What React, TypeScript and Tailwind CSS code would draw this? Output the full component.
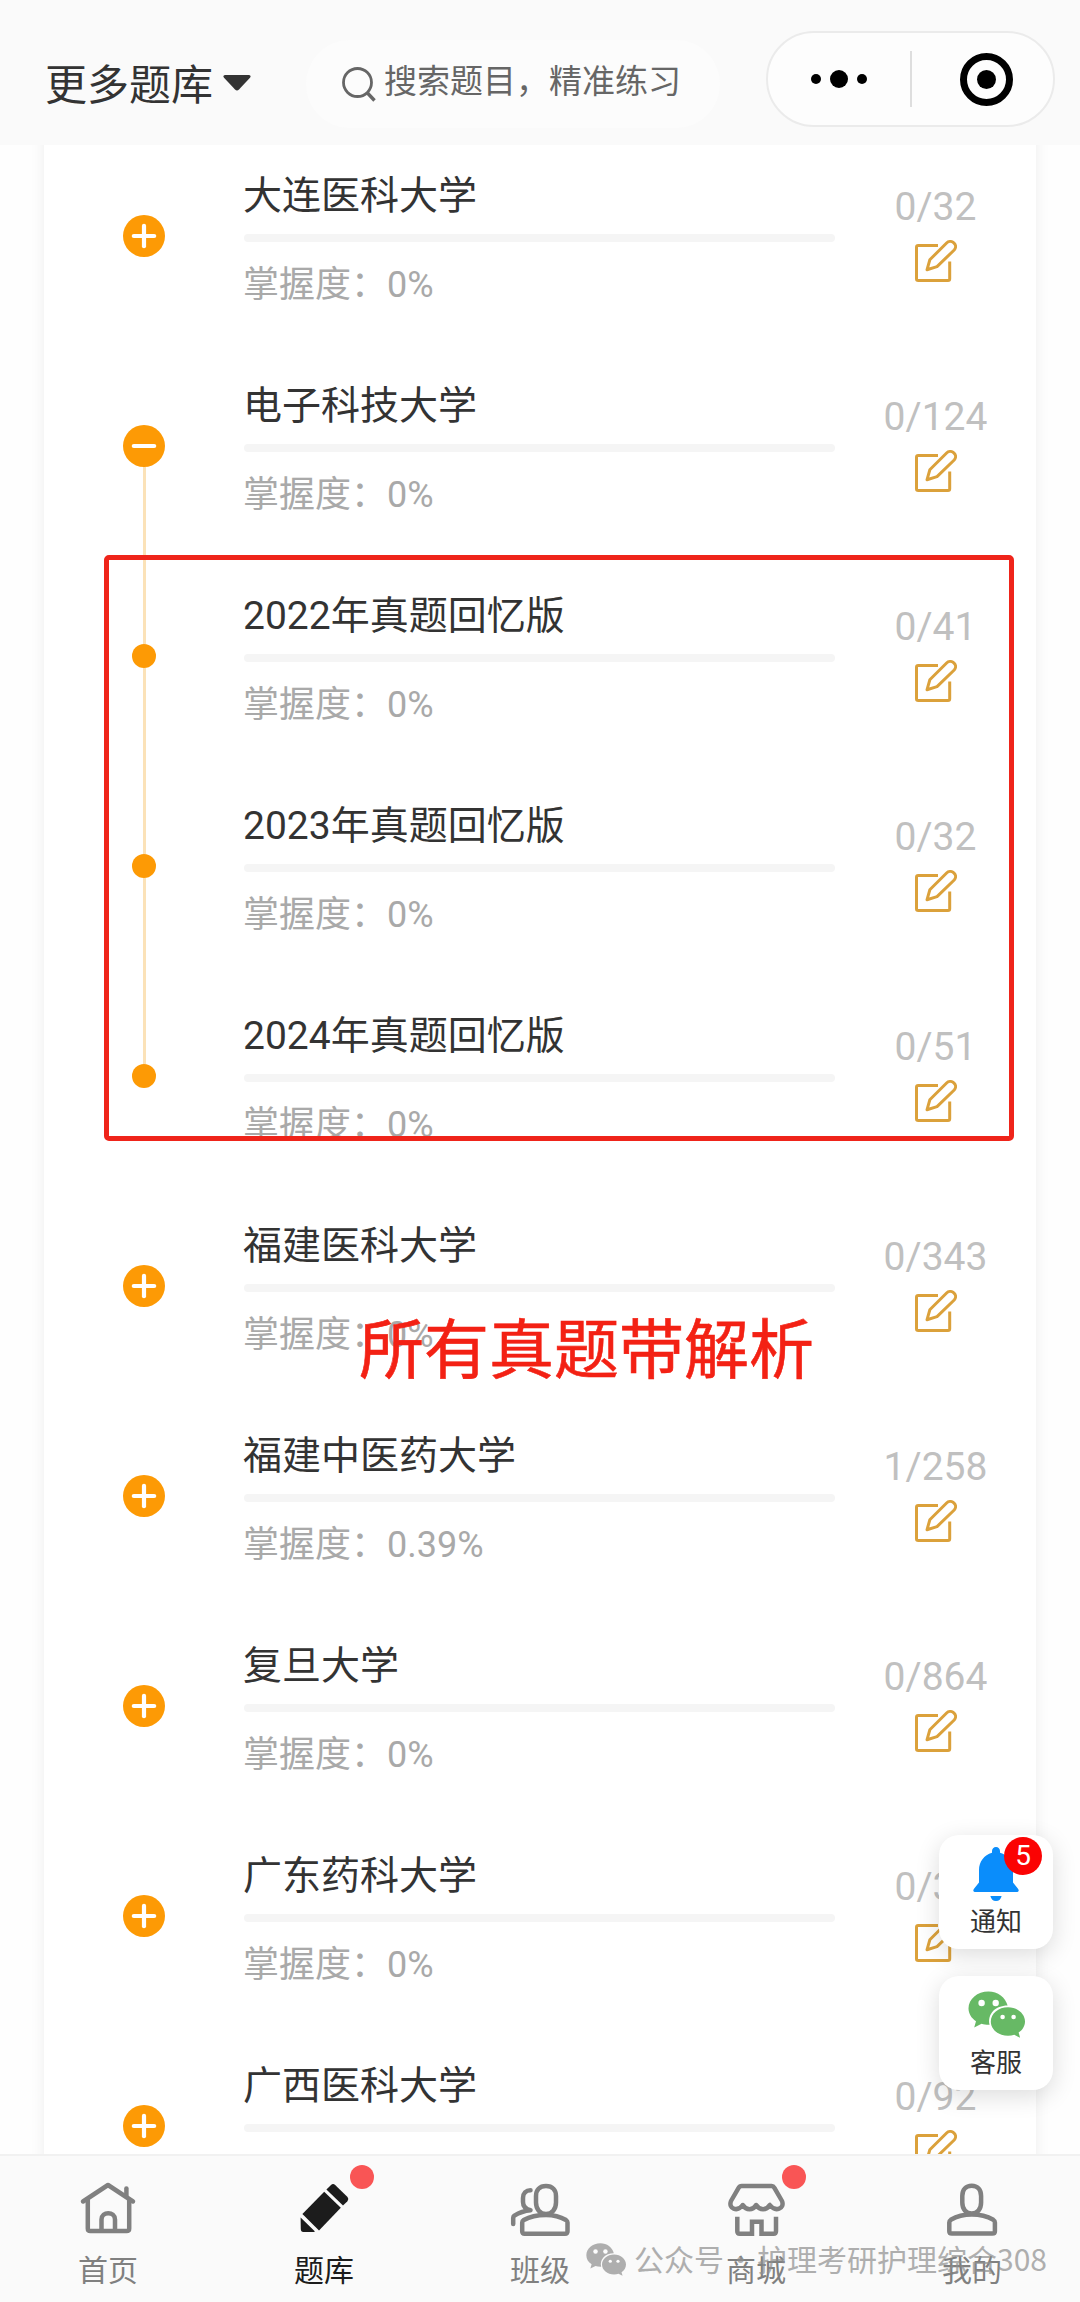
import type { ReactNode } from 'react';

type NodeType = 'plus' | 'minus' | 'dot';

interface Item {
  title: string;
  done: number;
  total: number;
  rate: string;
  type: NodeType;
  last?: boolean;
}

const items: Item[] = [
  { title: '大连医科大学', done: 0, total: 32, rate: '0%', type: 'plus' },
  { title: '电子科技大学', done: 0, total: 124, rate: '0%', type: 'minus' },
  { title: '2022年真题回忆版', done: 0, total: 41, rate: '0%', type: 'dot' },
  { title: '2023年真题回忆版', done: 0, total: 32, rate: '0%', type: 'dot' },
  { title: '2024年真题回忆版', done: 0, total: 51, rate: '0%', type: 'dot', last: true },
  { title: '福建医科大学', done: 0, total: 343, rate: '0%', type: 'plus' },
  { title: '福建中医药大学', done: 1, total: 258, rate: '0.39%', type: 'plus' },
  { title: '复旦大学', done: 0, total: 864, rate: '0%', type: 'plus' },
  { title: '广东药科大学', done: 0, total: 32, rate: '0%', type: 'plus' },
  { title: '广西医科大学', done: 0, total: 92, rate: '0%', type: 'plus' },
];

function EditIcon() {
  return (
    <svg width="42" height="42" viewBox="0 0 42 42" fill="none" stroke="#dba13b" strokeWidth="3" strokeLinejoin="round">
      <path d="M23 5.5H3.2Q1.5 5.5 1.5 7.2V38.8Q1.5 40.5 3.2 40.5H33Q34.7 40.5 34.7 38.8V21.5" />
      <path d="M12 29.8L14.8 19.8L31.6 3C33.4 1.2 36.4 0.8 38.8 2.8C41.2 5 41 8 39.2 10L22 26.6Z" />
    </svg>
  );
}

function WechatIcon({ className }: { className: string }) {
  return (
    <svg className={className} viewBox="0 0 57 47" fill="currentColor">
      <path d="M20.5 0.5C9.4 0.5 0.5 8 0.5 17.3C0.5 22.6 3.3 27.2 8 30.2L6.2 36.5L13.6 32.8C16 33.5 18.5 33.9 21.6 33.8C19.2 23 27.4 14.7 39.6 14.6C37.6 6.4 29.8 0.5 20.5 0.5Z" />
      <path d="M40 16.2C30.4 16.2 22.8 22.6 22.8 30.5C22.8 38.4 30.4 44.8 40 44.8C42.3 44.8 44.4 44.5 46.3 43.8L52.1 46.8L50.6 41.6C54.5 39 57 35 57 30.5C57 22.6 49.4 16.2 40 16.2Z" />
      <circle cx="13.6" cy="12" r="3.2" fill="#fff" />
      <circle cx="27.7" cy="12" r="3.2" fill="#fff" />
      <circle cx="34.6" cy="26" r="2.3" fill="#fff" />
      <circle cx="45.6" cy="26" r="2.3" fill="#fff" />
    </svg>
  );
}

function TreeNode({ type }: { type: NodeType }) {
  if (type === 'dot') return <div className="h-6 w-6 rounded-full bg-[#fd9a05]" />;
  return (
    <svg width="42" height="42" viewBox="0 0 42 42" stroke="#fff" strokeWidth="4.2" strokeLinecap="round">
      <circle cx="21" cy="21" r="21" fill="#fd9a05" stroke="none" />
      <path d="M10.8 21H31.2" />
      {type === 'plus' && <path d="M21 10.8V31.2" />}
    </svg>
  );
}

function Row({ item }: { item: Item }) {
  const up = item.type === 'dot';
  const down = item.type === 'minus' || (up && !item.last);
  return (
    <div className="flex h-[210px] shrink-0">
      <div className="ml-[75px] flex w-[50px] flex-col items-center">
        <div className={up ? 'w-[3px] flex-1 bg-[#fbe2b8]' : 'flex-1'} />
        <TreeNode type={item.type} />
        <div className={down ? 'w-[3px] flex-1 bg-[#fbe2b8]' : 'flex-1'} />
      </div>
      <div className="ml-[74px] w-[592px] pt-[38px]">
        <p className="h-[54px] text-[39px] leading-[54px] text-[#333]">{item.title}</p>
        <div className="mt-[11px] ml-px h-2 rounded-full bg-[#f5f5f5]" />
        <p className="mt-[21px] h-11 text-[36px] leading-[44px] text-[#a9a9a9]">掌握度：{item.rate}</p>
      </div>
      <div className="flex w-[201px] flex-col items-center pt-[53px]">
        <p className="h-[46px] text-[39px] leading-[46px] text-[#c0c0c0]">
          {item.done}/{item.total}
        </p>
        <div className="mt-[10px]">
          <EditIcon />
        </div>
      </div>
    </div>
  );
}

function Header() {
  return (
    <header className="flex h-[145px] shrink-0 items-start bg-[#fafafa]">
      <div className="mt-[57px] ml-[45px] flex h-14 w-[261px] items-center text-[42px] whitespace-nowrap text-[#333]">
        更多题库
        <svg className="mb-1 ml-[10px]" width="28" height="16" viewBox="0 0 28 16" fill="#333">
          <path d="M2 0H26Q28.6 0.4 27 2.8L16 14.6Q14 16.6 12 14.6L1 2.8Q-0.6 0.4 2 0Z" />
        </svg>
      </div>
      <div className="mt-10 flex h-[88px] w-[414px] items-center rounded-full bg-[#fcfcfc] pl-9 text-[33px] text-[#666]">
        <svg width="34" height="36" viewBox="0 0 34 36" fill="none" stroke="#666" strokeWidth="2.8">
          <circle cx="15.5" cy="16.5" r="14" />
          <path d="M25 26.5L32.5 34.5" strokeWidth="3.4" />
        </svg>
        <span className="ml-2 h-11 whitespace-nowrap leading-[40px]">搜索题目，精准练习</span>
      </div>
      <div className="mt-[31px] ml-[46px] flex h-24 w-[289px] items-center rounded-full border-2 border-[#ebebeb] bg-[#fdfdfd]">
        <div className="flex w-[142px] items-center justify-center gap-[9px]">
          <i className="h-[10px] w-[10px] rounded-full bg-black" />
          <i className="h-[18px] w-[18px] rounded-full bg-black" />
          <i className="h-[10px] w-[10px] rounded-full bg-black" />
        </div>
        <div className="h-14 w-[2px] bg-[#dedede]" />
        <div className="flex flex-1 items-center justify-center pl-[8px]">
          <div className="flex h-[53px] w-[53px] items-center justify-center rounded-full border-[7px] border-black">
            <i className="h-[19px] w-[19px] rounded-full bg-black" />
          </div>
        </div>
      </div>
    </header>
  );
}

function FloatButton({ label, children }: { label: string; children: ReactNode }) {
  return (
    <div className="relative flex h-[114px] w-[114px] flex-col items-center rounded-[20px] bg-white shadow-[0_6px_24px_rgba(0,0,0,0.14)]">
      <div className="flex h-[70px] items-end justify-center">{children}</div>
      <span className="h-[34px] text-[26px] leading-[34px] text-[#333]">{label}</span>
    </div>
  );
}

function Tab({ label, active, dot, children }: { label: string; active?: boolean; dot?: boolean; children: ReactNode }) {
  return (
    <div className={active ? 'relative flex flex-1 flex-col items-center text-[#1c1c1c]' : 'relative flex flex-1 flex-col items-center text-[#808080]'}>
      <div className="mt-6 flex h-[58px] items-center justify-center">{children}</div>
      <span className="mt-[13px] h-10 text-[30px] leading-10">{label}</span>
      {dot && <i className="absolute top-[9px] left-[134px] h-6 w-6 rounded-full bg-[#f95555]" />}
    </div>
  );
}

const tabIcon = {
  width: 60,
  height: 56,
  viewBox: '0 0 60 56',
  fill: 'none',
  stroke: 'currentColor',
  strokeWidth: 4.5,
  strokeLinecap: 'round',
  strokeLinejoin: 'round',
} as const;

function TabBar() {
  return (
    <nav className="relative flex h-[148px] shrink-0 border-t-2 border-[#f1f1f1] bg-[#fafafa]">
      <Tab label="首页">
        <svg {...tabIcon}>
          <path d="M5 20.5L30 4L55 20.5" />
          <path d="M9.8 19V47.5Q9.8 50 12.3 50H48.7Q51.2 50 51.2 47.5V19" />
          <path d="M48.4 7.5V15" />
          <path d="M23.5 49.5V38.5C23.5 30 37 30 37 38.5V49.5" />
        </svg>
      </Tab>
      <Tab label="题库" active dot>
        <svg width="60" height="56" viewBox="0 0 60 56" fill="currentColor">
          <path d="M36.8 4.2Q39 2 41.4 4.2L53 15.6Q55.4 18 53.2 20.4L49 24.6L32.4 8.6Z" />
          <path d="M30.2 10.8L46.8 26.8L25 49.5L8.4 33.1Z" />
          <path d="M6.6 36.4L21 50.4Q19.8 51 18.4 51H9.4Q6.8 51 6.8 48Z" />
        </svg>
      </Tab>
      <Tab label="班级">
        <svg {...tabIcon}>
          <path d="M36 5C29.5 5 26 9 26 15V21.5C26 28 30 33 36 33S46 28 46 21.5V15C46 9 42.5 5 36 5Z" />
          <path d="M36 34C27 34 18 36.6 13.8 39Q12.2 40 12.2 41.6V50.3Q12.2 52.8 14.7 52.8H55Q57.5 52.8 57.5 50.3V41.6Q57.5 40 56 39C51.8 36.6 44.5 34 36 34Z" />
          <path d="M20.5 9.2C16 9.2 13 12.5 13 17V21C13 24.8 15.5 28 20.5 29.3C13 30 8 32.4 4.4 34.6Q3.2 35.5 3.2 37V43" />
        </svg>
      </Tab>
      <Tab label="商城" dot>
        <svg {...tabIcon}>
          <path d="M15.6 5H45.6Q47.4 5 48.4 6.8L56 20C59 27.6 49.5 31.5 43.8 24C40.2 29.8 34 29.8 30.2 24C26.6 29.8 20.4 29.8 16.8 24C11.2 31.5 2 27.6 5 20L12.6 6.8Q13.6 5 15.6 5Z" />
          <path d="M11.3 35.7V50.3Q11.3 52.8 13.8 52.8H26V40.8H35.5V52.8H47.5Q50 52.8 50 50.3V35.7M26 52.8H24M35.5 52.8H37" strokeLinecap="butt" strokeLinejoin="miter" />
        </svg>
      </Tab>
      <Tab label="我的">
        <svg {...tabIcon}>
          <path d="M29.7 4.8C23.8 4.8 20.3 8.8 20.3 15V21.5C20.3 28 24 32.6 29.7 32.6S39.1 28 39.1 21.5V15C39.1 8.8 35.6 4.8 29.7 4.8Z" />
          <path d="M29.8 33.6C21 33.6 13 36.4 8.8 38.8Q7.3 39.8 7.3 41.4V50.2Q7.3 52.6 9.8 52.6H50.4Q52.9 52.6 52.9 50.2V41.4Q52.9 39.8 51.3 38.8C47 36.4 38.6 33.6 29.8 33.6Z" />
        </svg>
      </Tab>
      {/* account watermark */}
      <div className="absolute top-[81px] left-[586px] flex h-11 items-center whitespace-nowrap font-['Noto_Sans_CJK_SC',sans-serif] text-[30px] leading-[44px] text-[#8f8f8f] opacity-70">
        <WechatIcon className="mr-[8px] h-[33px] w-[40px]" />
        <span className="h-11 leading-[42px]">公众号</span>
        <span className="h-11 w-[33px] text-center leading-[42px]">·</span>
        <span className="h-11 leading-[42px]">护理考研护理综合308</span>
      </div>
    </nav>
  );
}

function App() {
  return (
    <div className="relative flex h-[2302px] w-[1080px] flex-col overflow-hidden bg-[#fefefe] font-[Roboto,'Noto_Sans_CJK_SC',sans-serif]">
      <Header />
      <main className="min-h-0 flex-1 overflow-hidden px-11">
        <div className="-mt-[14px] flex flex-col bg-white shadow-[0_0_14px_rgba(0,0,0,0.07)]">
          {items.map((item) => (
            <Row key={item.title} item={item} />
          ))}
        </div>
      </main>
      <TabBar />

      <div className="absolute top-[555px] left-[104px] h-[586px] w-[910px] rounded-[5px] border-[5px] border-[#ef241a]" />
      <p className="absolute top-[1303px] left-[359px] text-[65px] leading-[96px] whitespace-nowrap text-[#f32114] [-webkit-text-stroke:0.6px_#f32114]">
        所有真题带解析
      </p>

      <div className="absolute top-[1835px] left-[939px] flex flex-col gap-[27px]">
        <FloatButton label="通知">
          <svg className="mb-1" width="46" height="54" viewBox="0 0 46 54" fill="#0a8dfb">
            <path d="M23 0C20.6 0 19 1.8 19 4V5.8C11 8 6 15 6 23V35.5L1 41.8C-0.4 43.6 0.4 45 2.4 45H43.6C45.6 45 46.4 43.6 45 41.8L40 35.5V23C40 15 35 8 27 5.8V4C27 1.8 25.4 0 23 0Z" />
            <path d="M17.4 49H28.6C28 52 26 54 23 54S18 52 17.4 49Z" />
          </svg>
          <span className="absolute top-[2px] left-[65px] flex h-[38px] w-[38px] items-center justify-center rounded-full bg-[#fb0303] text-[28px] text-white">
            5
          </span>
        </FloatButton>
        <FloatButton label="客服">
          <WechatIcon className="mb-2 h-[47px] w-[57px] text-[#67b965]" />
        </FloatButton>
      </div>
    </div>
  );
}

export default App;
